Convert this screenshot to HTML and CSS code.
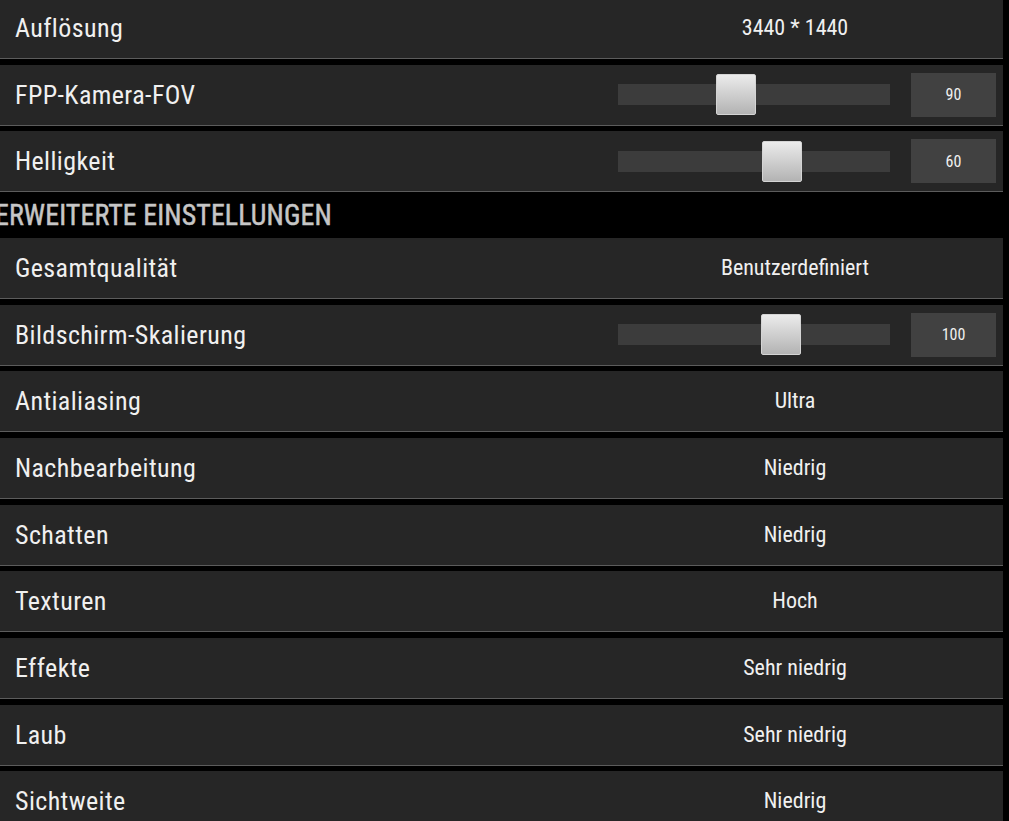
FILE: index.html
```html
<!DOCTYPE html>
<html lang="de">
<head>
<meta charset="utf-8">
<title>Grafikeinstellungen</title>
<link rel="stylesheet" href="styles.css">
</head>
<body>
<div class="settings">
  <div class="row">
    <span class="label">Auflösung</span>
    <div class="control text"><span class="value">3440 * 1440</span></div>
  </div>
  <div class="row">
    <span class="label">FPP-Kamera-FOV</span>
    <div class="control slider">
      <div class="track"><div class="thumb" style="left: 36.0%"></div></div>
      <div class="box">90</div>
    </div>
  </div>
  <div class="row">
    <span class="label">Helligkeit</span>
    <div class="control slider">
      <div class="track"><div class="thumb" style="left: 52.9%"></div></div>
      <div class="box">60</div>
    </div>
  </div>
  <div class="section"><h2 class="section-title">ERWEITERTE EINSTELLUNGEN</h2></div>
  <div class="row">
    <span class="label">Gesamtqualität</span>
    <div class="control text"><span class="value">Benutzerdefiniert</span></div>
  </div>
  <div class="row">
    <span class="label">Bildschirm-Skalierung</span>
    <div class="control slider">
      <div class="track"><div class="thumb" style="left: 52.6%"></div></div>
      <div class="box">100</div>
    </div>
  </div>
  <div class="row">
    <span class="label">Antialiasing</span>
    <div class="control text"><span class="value">Ultra</span></div>
  </div>
  <div class="row">
    <span class="label">Nachbearbeitung</span>
    <div class="control text"><span class="value">Niedrig</span></div>
  </div>
  <div class="row">
    <span class="label">Schatten</span>
    <div class="control text"><span class="value">Niedrig</span></div>
  </div>
  <div class="row">
    <span class="label">Texturen</span>
    <div class="control text"><span class="value">Hoch</span></div>
  </div>
  <div class="row">
    <span class="label">Effekte</span>
    <div class="control text"><span class="value">Sehr niedrig</span></div>
  </div>
  <div class="row">
    <span class="label">Laub</span>
    <div class="control text"><span class="value">Sehr niedrig</span></div>
  </div>
  <div class="row">
    <span class="label">Sichtweite</span>
    <div class="control text"><span class="value">Niedrig</span></div>
  </div>
</div>
</body>
</html>
```

FILE: styles.css
```css
html, body {
  margin: 0;
  padding: 0;
  background: #000;
  overflow: hidden;
}

body {
  font-family: "Roboto Condensed", Roboto, "DejaVu Sans Condensed", sans-serif;
  font-stretch: condensed;
  font-weight: 400;
  color: #f0f0f0;
}

.settings {
  width: 1003px;
  margin-top: -2px;
  display: flex;
  flex-direction: column;
}

.row {
  height: 60px;
  background: #262626;
  border-bottom: 1px solid #5c5c5c;
  display: flex;
  align-items: center;
  margin-bottom: 5.67px;
}

.label {
  flex: 1;
  padding-left: 15px;
  font-size: 26px;
  letter-spacing: 0.4px;
  line-height: 1;
}

.control {
  width: 416px;
  height: 100%;
  display: flex;
  align-items: center;
  box-sizing: border-box;
}

.control.text {
  justify-content: center;
}

.value {
  font-size: 22px;
  line-height: 1;
}

.control.slider {
  padding: 0 7px 0 31px;
  gap: 21px;
}

.track {
  flex: 1;
  height: 21px;
  background: #3c3c3c;
  position: relative;
}

.thumb {
  position: absolute;
  top: -10px;
  width: 40px;
  height: 41px;
  box-sizing: border-box;
  border: 1px solid #d4d4d4;
  border-radius: 2px;
  background: linear-gradient(#ebebeb, #b3b3b3);
}

.box {
  width: 85px;
  height: 44px;
  background: #414141;
  display: flex;
  align-items: center;
  justify-content: center;
  font-size: 16px;
  color: #f0f0f0;
}

.section {
  height: 45.7px;
  margin-top: -5.67px;
  display: flex;
  align-items: center;
  overflow: hidden;
}

.section-title {
  margin: 0 0 0 -5px;
  font-family: "Roboto Condensed", Roboto, sans-serif;
  font-stretch: condensed;
  font-weight: 400;
  font-size: 30px;
  letter-spacing: 0.1px;
  line-height: 1;
  color: #c6c6c6;
  white-space: nowrap;
  -webkit-text-stroke: 0.5px #c6c6c6;
  transform: scaleX(0.93);
  transform-origin: left center;
}
```
